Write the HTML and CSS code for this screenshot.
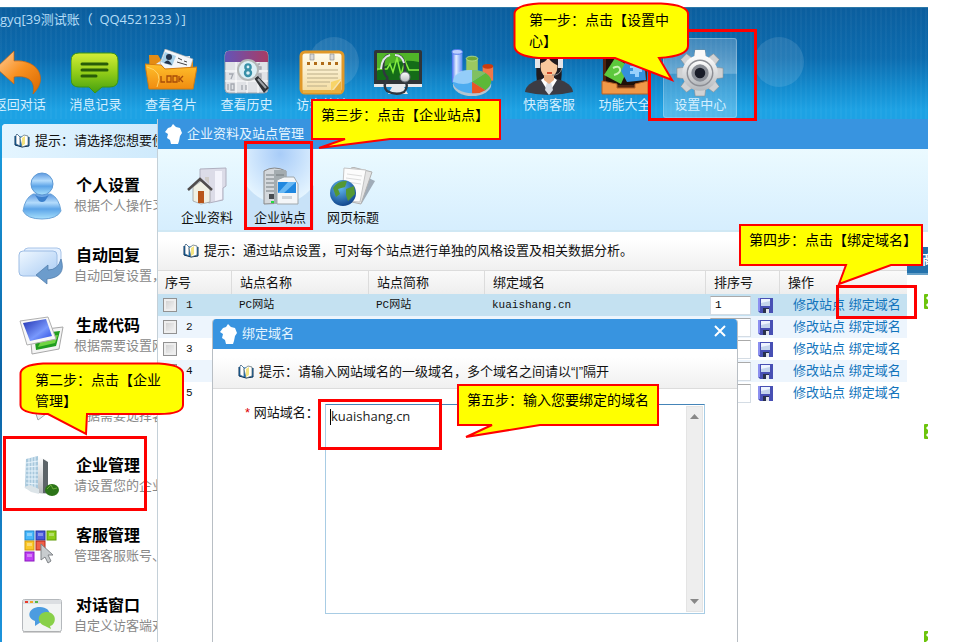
FILE: index.html
```html
<!DOCTYPE html>
<html lang="zh-CN">
<head>
<meta charset="utf-8">
<title>企业资料及站点管理</title>
<link rel="stylesheet" href="styles.css">
</head>
<body>
<svg class="defs" width="0" height="0" aria-hidden="true">
  <defs>
    <linearGradient id="orange" x1="0" y1="0" x2="1" y2="1"><stop offset="0" stop-color="#ffd0a0"/><stop offset=".5" stop-color="#f89020"/><stop offset="1" stop-color="#d86800"/></linearGradient>
    <linearGradient id="folder" x1="0" y1="0" x2="0" y2="1"><stop offset="0" stop-color="#ffc02c"/><stop offset="1" stop-color="#f08c10"/></linearGradient>
    <linearGradient id="green" x1="0" y1="0" x2="0" y2="1"><stop offset="0" stop-color="#d4ee38"/><stop offset=".5" stop-color="#90cc18"/><stop offset="1" stop-color="#44a010"/></linearGradient>
    <linearGradient id="purple" x1="0" y1="0" x2="1" y2="0"><stop offset="0" stop-color="#6454b8"/><stop offset="1" stop-color="#a83c64"/></linearGradient>
    <linearGradient id="paper" x1="0" y1="0" x2="0" y2="1"><stop offset="0" stop-color="#fffdf0"/><stop offset="1" stop-color="#f4dca0"/></linearGradient>
    <linearGradient id="grey" x1="0" y1="0" x2="0" y2="1"><stop offset="0" stop-color="#ffffff"/><stop offset="1" stop-color="#b4b8bc"/></linearGradient>
    <linearGradient id="blue" x1="0" y1="0" x2="0" y2="1"><stop offset="0" stop-color="#5c98e0"/><stop offset=".35" stop-color="#b4dcfc"/><stop offset=".6" stop-color="#5ca4e8"/><stop offset="1" stop-color="#a8e0fc"/></linearGradient>
    <linearGradient id="bar" x1="0" y1="0" x2="1" y2="0"><stop offset="0" stop-color="#4068f0"/><stop offset=".4" stop-color="#e4f0ff"/><stop offset="1" stop-color="#5888f4"/></linearGradient>
    <linearGradient id="bubble" x1="0" y1="0" x2="1" y2="1"><stop offset="0" stop-color="#f0f8ff"/><stop offset="1" stop-color="#aaccf4"/></linearGradient>
    <linearGradient id="screen" x1="0" y1="0" x2="1" y2="1"><stop offset="0" stop-color="#2030b0"/><stop offset=".6" stop-color="#7898fc"/><stop offset="1" stop-color="#2848e0"/></linearGradient>
    <radialGradient id="globe" cx=".4" cy=".3" r=".8"><stop offset="0" stop-color="#60b8f0"/><stop offset="1" stop-color="#083880"/></radialGradient>
    <symbol id="book" viewBox="0 0 16 14"><path d="M1 2v9l7 2 7-1V3" fill="#1488d8" stroke="#0c2c50"/><path d="M3 0l3 3v9L2 10V1z" fill="#fff" stroke="#244c70" stroke-width=".7"/><path d="M6 4l4-3 4 1v9l-6 2z" fill="#fff" stroke="#55666c" stroke-width=".7"/><path d="M8 4l3-2v8l-3 2z" fill="#f4e480"/></symbol>
    <symbol id="bird" viewBox="0 0 17 20"><path d="M8 0l3 3 4 1 2 5-2 3-1 5-1 3H6l-1-4-3-2 1-4-3-2 3-4 3-1z" fill="#fff"/></symbol>
    <symbol id="disk" viewBox="0 0 15 15"><path d="M0 0h15v15H2l-2-2z" fill="#4850b4"/><path d="M0 0h2v13H0z" fill="#8c90f0"/><path d="M3 1h9v7H3z" fill="#eef4ff"/><path d="M3 5l9-2v5H3z" fill="#c4d4ec"/><path d="M5 10h6v5H5z" fill="#28304c"/><path d="M8 11h3v4H8z" fill="#e0e4ec"/></symbol>
    <symbol id="plus" viewBox="0 0 15 15"><rect width="15" height="15" rx="1" fill="#6cc40c"/><path d="M3 3l9 9M12 3l-9 9" stroke="#fff" stroke-width="3"/></symbol>
  </defs>
</svg>

<div class="stage">
<div class="app">
  <header class="banner">
    <div class="glow glow-left"></div>
    <div class="glow glow-right"></div>
    <h1 class="account">gyq[39测试账（&nbsp; QQ4521233 ）]</h1>
    <nav class="toolbar" aria-label="工具栏">
      <button class="tool" type="button">
        <svg width="48" height="48" viewBox="0 0 48 48"><path d="M0 19L18 2v10c24-2 35 18 19 33 3-13-5-19-19-17v7z" fill="url(#orange)" stroke="#c86410" stroke-width=".7"/></svg>
        <span>返回对话</span>
      </button>
      <button class="tool" type="button">
        <svg width="48" height="48" viewBox="0 0 48 48"><path d="M8 4h32q7 0 7 8v18q0 8-8 8H31l-7 6-6-6H8q-8 0-8-8V12q0-8 8-8z" fill="url(#green)" stroke="#3c9414"/><path d="M11 15h25M11 21h25M11 27h14" stroke="#285c08" stroke-width="3" stroke-linecap="round"/></svg>
        <span>消息记录</span>
      </button>
      <button class="tool" type="button">
        <svg width="52" height="48" viewBox="0 0 52 48"><path d="M4 6h9l3 5h32v20H5z" fill="#e48c14"/><path d="M8 17l12-8 25-2v12H10z" fill="#e8ecf0"/><path d="M20 0l28 10-3 10H20l-5-6z" fill="#f4f6f8" stroke="#a8a8a8" stroke-width=".6"/><path d="M20 3l11 4-4 10-11-4z" fill="#a8d0e8"/><circle cx="24" cy="8" r="3" fill="#24344c"/><path d="M19 14q4-6 8 2z" fill="#24344c"/><path d="M33 9l4 2m2 1l3 1M32 13l10 3" stroke="#444"/><path d="M0 15l16 1 4 4 32-2-4 22H4z" fill="url(#folder)" stroke="#d47c10"/><path d="M2 18q17 4 10 20" fill="none" stroke="#ffd468"/><path d="M16 27v6h4M22 27h4v6h-4zM28 27h4v6h-4zM34 27v6M38 27l-3 3 3 3" fill="none" stroke="#a84c08" stroke-width="1.300"/></svg>
        <span>查看名片</span>
      </button>
      <button class="tool" type="button">
        <svg width="48" height="48" viewBox="0 0 48 48"><rect x="2" y="2" width="43" height="42" rx="4" fill="#e0e2e6" stroke="#a0a4ac"/><path d="M6 2h35q4 0 4 5v6H2V7q0-5 4-5z" fill="url(#purple)"/><path d="M2 22h43M2 32h43M13 13v31M24 13v31M35 13v31" stroke="#fff"/><path d="M6 25h4l-2 5M5 35v6M8 35h3v6H8zM19 36v5M23 36v5M37 15h-2v5h3v-2h-3M38 30v-5h-3v2h3" fill="none" stroke="#a4a8b0" stroke-width="1.300"/><path d="M31 29l4-2 11 12-5 5z" fill="#303438"/><path d="M35 30l8 9" stroke="#a0a4a8" stroke-width="2"/><circle cx="25" cy="21" r="10" fill="#ddf0f6" stroke="#b4b8b8" stroke-width="2"/><circle cx="25" cy="18" r="2.600" fill="none" stroke="#3890a8" stroke-width="2.400"/><circle cx="25" cy="24" r="3" fill="none" stroke="#3890a8" stroke-width="2.400"/></svg>
        <span>查看历史</span>
      </button>
      <button class="tool" type="button">
        <svg width="48" height="48" viewBox="0 0 48 48"><rect x="3" y="3" width="42" height="41" rx="4" fill="url(#paper)" stroke="#e09828" stroke-width="3"/><path d="M5 41h31l7-9v12H5z" fill="#e8b040"/><path d="M33 42l10-12-10 3z" fill="#f8d468"/><path d="M9 13h3v3H9zM16 13h3v3h-3zM23 13h3v3h-3zM30 13h3v3h-3zM37 13h3v3h-3z" fill="#b06c18"/><path d="M9 21h31M9 25h31M9 29h31M9 33h23M9 37h20" stroke="#bcae88"/><path d="M12 5h4v6h-4zM32 5h4v6h-4z" fill="#d8d8d8" stroke="#888" stroke-width=".6"/></svg>
        <span>访客统计</span>
      </button>
      <button class="tool" type="button" aria-label="监控">
        <svg width="50" height="48" viewBox="0 0 50 48"><rect x="1" y="1" width="48" height="36" rx="2" fill="#303438"/><path d="M4 4h42v27H4z" fill="#146c18"/><path d="M4 4h42v9Q24 8 4 22z" fill="#50b428"/><path d="M4 20h10l3-5 3 8 4-14 4 17 4-14 4 9h10" fill="none" stroke="#84ec40" stroke-width="1.500"/><path d="M1 35h48v3H1zM19 38h12l4 7H15z" fill="#e8eaec"/><path d="M16 6C8 8 9 25 15 29M22 6c8 0 10 6 10 17M15 29q-6 8-1 13 9 5 17 1 5-5 1-12" fill="none" stroke="#303840" stroke-width="2.400"/><path d="M17 6q-8 2-9 14M22 6q7 0 9 8" fill="none" stroke="#e4e8ec" stroke-width="2"/><circle cx="32" cy="28" r="5" fill="url(#grey)" stroke="#687078"/></svg>
      </button>
      <button class="tool" type="button" aria-label="统计">
        <svg width="48" height="50" viewBox="0 0 48 50"><path d="M2 3v32h11V3z" fill="url(#bar)"/><ellipse cx="7.500" cy="3" rx="5.500" ry="2.500" fill="#bcd0ff" stroke="#5078ec"/><path d="M17 10v17h12V10z" fill="#9cc860"/><ellipse cx="23" cy="10" rx="6" ry="2.500" fill="#70a838" stroke="#b0d888"/><path d="M34 18v15h11V18z" fill="#f07848"/><ellipse cx="39.500" cy="18" rx="5.500" ry="2.500" fill="#c83c10"/><ellipse cx="23" cy="37" rx="20" ry="12" fill="#b4c4d0"/><ellipse cx="23" cy="34" rx="20" ry="12" fill="#4cacf0"/><path d="M23 34L37 25q12 8 0 18z" fill="#5cb838"/><path d="M23 34l14 9q-6 4-14 3z" fill="#e85424"/><path d="M23 34V22q8 0 14 3z" fill="#80c060"/><path d="M3 34q2-14 20-12v12q-8 5-20 0z" fill="#b4dcfc" opacity=".7"/></svg>
      </button>
      <button class="tool" type="button">
        <svg width="48" height="48" viewBox="0 0 48 48"><path d="M12 33Q8 2 24 2t12 31z" fill="#201c20"/><path d="M0 43q1-9 16-13h16q15 4 16 13-24 6-48 0z" fill="#3c3c44"/><path d="M16 31l8 13 8-13-4-3h-8z" fill="#fff"/><path d="M22 33h4l2 8-4 5-4-5z" fill="#d8dce4"/><ellipse cx="24" cy="17" rx="8.500" ry="12" fill="#f8c89c"/><path d="M19 26h10v5l-5 4-5-4z" fill="#e8ac80"/><path d="M14 14Q16 0 24 4q9-2 10 13-8-3-11-9-2 6-9 6z" fill="#201c20"/><path d="M10 10h5v9h-5zM33 10h5v9h-5z" fill="#e4e4e8"/><path d="M37 19q-2 8-10 7" fill="none" stroke="#888"/><path d="M22 24h5" stroke="#d04828" stroke-width="2"/></svg>
        <span>快商客服</span>
      </button>
      <button class="tool" type="button">
        <svg width="48" height="48" viewBox="0 0 48 48"><path d="M2 6h44v38H2z" fill="#502410"/><path d="M5 9h38v27H5z" fill="#201008"/><path d="M14 9l14 8-8 18-17-9z" fill="#5cc83c"/><path d="M27 8l16 2 2 21-19 2-6-11z" fill="#3490dc"/><path d="M12 19q6-3 7 1t-6 6" fill="none" stroke="#c8f4b0" stroke-width="2"/><path d="M29 17h4v-3h4v4h4v5h-3v5h-4v-3h-5v-3h3v-3h-3z" fill="#98d0fc"/><path d="M1 32l15 3v4h18v-4l13-3v13H1z" fill="#f09848" stroke="#b86024"/></svg>
        <span>功能大全</span>
      </button>
      <button class="tool tool-active" type="button">
        <svg width="50" height="50" viewBox="0 0 50 50"><g fill="#d0d2d4" stroke="#8c8e90" stroke-width=".6"><path d="M20 1h10l1 8h-12zM19 41h12l-1 8H20zM1 20l8-1v12l-8-1zM41 19l8 1v10l-8 1z"/><path d="M11 5l8 6-8 8-6-8zM39 5l6 6-6 8-8-8zM5 39l6-8 8 8-8 6zM31 39l8-8 6 8-6 6z"/></g><circle cx="25" cy="25" r="18.500" fill="url(#grey)"/><path d="M20 1h10l1 8h-12z" fill="#f8f8f8"/><circle cx="25" cy="25" r="14" fill="#8c8e94"/><circle cx="25" cy="25" r="12.500" fill="url(#grey)"/><circle cx="25" cy="25" r="9" fill="#888c94"/><circle cx="25" cy="25" r="5.500" fill="#181c28"/></svg>
        <span>设置中心</span>
      </button>
    </nav>
  </header>

  <div class="workspace">
    <aside class="sidebar">
      <p class="side-hint"><svg class="i-book"><use href="#book"/></svg>提示：请选择您想要使用的功能</p>
      <ul class="menu">
        <li class="entry">
          <svg width="42" height="48" viewBox="0 0 42 48"><path d="M12 22h18q8 4 10 17-4 8-19 8T2 39q2-13 10-17z" fill="url(#blue)" stroke="#6ca4d8"/><circle cx="21" cy="12" r="11" fill="url(#blue)" stroke="#5c98d4"/><path d="M14 23q7 4 14 0l-4 6q-3 2-6 0z" fill="#3c80cc"/></svg>
          <div><h2>个人设置</h2><p>根据个人操作习惯</p></div>
        </li>
        <li class="entry">
          <svg width="48" height="40" viewBox="0 0 48 40"><rect x="6" y="2" width="37" height="24" rx="4" fill="#e4f0ff" stroke="#a8c4e8"/><rect x="1" y="5" width="38" height="25" rx="4" fill="url(#bubble)" stroke="#9cbce4"/><path d="M43 13q6 18-14 20v5L18 29l12-10v5q10 0 13-11z" fill="#6c9ccc" stroke="#4c78a8" stroke-width=".7"/></svg>
          <div><h2>自动回复</h2><p>自动回复设置，设</p></div>
        </li>
        <li class="entry">
          <svg width="46" height="40" viewBox="0 0 46 40"><path d="M11 15l33-4-4 22-27 5z" fill="#f4f4f4" stroke="#a8a8a8"/><path d="M15 18l26-3-4 15-20 4z" fill="#209c20"/><path d="M24 21l15-2-3 8-17 4z" fill="#70d444"/><path d="M1 5l28-4 8 22-29 6z" fill="#f8f8f8" stroke="#b0b0b0"/><path d="M4 7l23-4 6 17-22 5z" fill="url(#screen)"/></svg>
          <div><h2>生成代码</h2><p>根据需要设置网站</p></div>
        </li>
        <li class="entry">
          <svg width="40" height="40" viewBox="0 0 40 40"><path d="M6 4l26 18-16 12z" fill="#e8ecf0" stroke="#a0a4a8"/></svg>
          <div><h2>&nbsp;</h2><p>根据需要选择客服</p></div>
        </li>
        <li class="entry">
          <svg width="40" height="42" viewBox="0 0 40 42"><path d="M4 4l12-3v37L3 33z" fill="#a8c8dc"/><path d="M16 1l9 4v34l-9-1z" fill="url(#grey)"/><path d="M21 4l5 3v31h-5z" fill="#5c6468"/><path d="M4 8l12-2M4 12l12-1M4 16h12M4 20h12M4 24h12M4 28l12 1M7 3v31M10 2v33M13 2v35" stroke="#e8f4fc"/><path d="M2 32l6-2 9 4v5l-8-2z" fill="#dce4e8"/><ellipse cx="30" cy="35" rx="7" ry="6" fill="#2c7418"/><path d="M25 34l4-4 2 4 4-1" stroke="#6cac38" fill="none"/></svg>
          <div><h2>企业管理</h2><p>请设置您的企业信</p></div>
        </li>
        <li class="entry">
          <svg width="38" height="36" viewBox="0 0 38 36"><g stroke-width="1"><rect x="2" y="3" width="9" height="9" fill="#48b8fc" stroke="#2088cc"/><rect x="13" y="3" width="9" height="9" fill="#4858dc" stroke="#2030a0"/><rect x="24" y="3" width="9" height="9" fill="#8ccc18" stroke="#609c08"/><rect x="2" y="13" width="9" height="9" fill="#fcc828" stroke="#d09c10"/><rect x="13" y="13" width="9" height="9" fill="#f06048" stroke="#b82818"/><rect x="2" y="24" width="9" height="9" fill="#c040f4" stroke="#8c18c0"/></g><path d="M4 5h5v3H4zM15 5h5v3h-5zM26 5h5v3h-5zM4 15h5v3H4zM4 26h5v3H4z" fill="#fff" opacity=".35"/><path d="M18 16v16l4-3 3 6 3-2-3-6h5z" fill="#c8cccf" stroke="#808488"/></svg>
          <div><h2>客服管理</h2><p>管理客服账号、客</p></div>
        </li>
        <li class="entry">
          <svg width="40" height="36" viewBox="0 0 40 36"><rect x=".5" y="1.500" width="39" height="32" rx="2" fill="#f2f4f4" stroke="#b4b8bc"/><path d="M1 2h38v4H1z" fill="#dcdfe2"/><path d="M3 3h3v2H3z" fill="#e83c2c"/><path d="M8 3h3v2H8z" fill="#f0a428"/><path d="M13 3h3v2h-3z" fill="#58b848"/><path d="M18 9c13 0 13 15 1 15l-6 4v-5C4 20 6 9 18 9z" fill="#4c9ce0"/><path d="M25 14c11 1 9 13 3 14l1 3-6-3c-9-3-8-14 2-14z" fill="#88d048"/><path d="M1 34h38" stroke="#a8a8a8"/></svg>
          <div><h2>对话窗口</h2><p>自定义访客端对话</p></div>
        </li>
      </ul>
    </aside>

    <main class="window">
      <div class="bar"><svg class="i-bird"><use href="#bird"/></svg><h2>企业资料及站点管理</h2></div>
      <nav class="tabs" aria-label="站点管理">
        <button class="tab" type="button">
          <svg width="40" height="40" viewBox="0 0 40 40"><path d="M13 2l26-1v18l-3 2v12l-14 3-9-6z" fill="#dcdce8" stroke="#b0b0c0"/><path d="M28 4v30l7-2V4z" fill="#f4f4fc"/><path d="M6 20l8-6 9 7v14l-9 2-8-3z" fill="#f0f0e4" stroke="#888" stroke-width=".6"/><path d="M1 23l12-11 12 11" fill="none" stroke="#504c4c" stroke-width="2.500"/><path d="M11 24h6v12h-6z" fill="#b85418"/><path d="M18 10h4v7l-4-4z" fill="#d0ccc8"/></svg>
          <span>企业资料</span>
        </button>
        <button class="tab tab-active" type="button">
          <svg width="38" height="40" viewBox="0 0 38 40"><path d="M3 4q10-6 22 0v32l-22 1z" fill="#d4d8dc" stroke="#888"/><path d="M13 3h12v34H13z" fill="#a4acb0"/><path d="M5 8h8M5 12h8M5 16h8M5 20h8M5 24h8M15 8h8" stroke="#747c80"/><path d="M8 27h5v5H8z" fill="#484c50"/><path d="M16 13l7-3h10l4 7v20H16z" fill="#f4f6f8" stroke="#a0a8ac"/><path d="M17 15h18v11H17z" fill="#2088e0"/><path d="M17 26l10-11h8L23 26z" fill="#68b8f4"/><path d="M21 29h10v3H21z" fill="#d0d4d8"/><path d="M10 34h3v2h-3z" fill="#24dc40"/></svg>
          <span>企业站点</span>
        </button>
        <button class="tab" type="button">
          <svg width="46" height="40" viewBox="0 0 46 40"><path d="M32 8l13 6-13 22h-8z" fill="#a0acb8"/><path d="M22 0l20 5-11 32-14-3z" fill="#e4e4e4" stroke="#b0b0b0"/><path d="M14 1l22 2-6 32-18-1z" fill="#fcfcfc" stroke="#c4c4c4"/><path d="M17 7l15 2M16 11l15 2M17 15l14 2" stroke="#ddd"/><circle cx="13" cy="26" r="13" fill="url(#globe)"/><path d="M3 21q5-8 14-7l-2 6-7 2 2 5-4 3zM16 22l8-3 1 8-7 7-2-6z" fill="#549834"/></svg>
          <span>网页标题</span>
        </button>
      </nav>
      <div class="lower">
        <div class="content">
          <p class="hint"><svg class="i-book"><use href="#book"/></svg>提示：通过站点设置，可对每个站点进行单独的风格设置及相关数据分析。</p>
          <table class="sites">
            <colgroup><col class="c-no"><col class="c-name"><col class="c-short"><col class="c-domain"><col class="c-sort"><col></colgroup>
            <thead><tr><th>序号</th><th>站点名称</th><th>站点简称</th><th>绑定域名</th><th>排序号</th><th>操作</th></tr></thead>
            <tbody>
              <tr class="current"><td><label><input type="checkbox">1</label></td><td>PC网站</td><td>PC网站</td><td>kuaishang.cn</td><td><div class="sort"><input type="text" value="1" aria-label="排序号"><button type="button" aria-label="保存"><svg><use href="#disk"/></svg></button></div></td><td><a href="#">修改站点</a> <a href="#">绑定域名</a></td></tr>
              <tr><td><label><input type="checkbox">2</label></td><td></td><td></td><td></td><td><div class="sort"><input type="text" aria-label="排序号"><button type="button" aria-label="保存"><svg><use href="#disk"/></svg></button></div></td><td><a href="#">修改站点</a> <a href="#">绑定域名</a></td></tr>
              <tr><td><label><input type="checkbox">3</label></td><td></td><td></td><td></td><td><div class="sort"><input type="text" aria-label="排序号"><button type="button" aria-label="保存"><svg><use href="#disk"/></svg></button></div></td><td><a href="#">修改站点</a> <a href="#">绑定域名</a></td></tr>
              <tr><td><label><input type="checkbox">4</label></td><td></td><td></td><td></td><td><div class="sort"><input type="text" aria-label="排序号"><button type="button" aria-label="保存"><svg><use href="#disk"/></svg></button></div></td><td><a href="#">修改站点</a> <a href="#">绑定域名</a></td></tr>
              <tr><td><label><input type="checkbox">5</label></td><td></td><td></td><td></td><td><div class="sort"><input type="text" aria-label="排序号"><button type="button" aria-label="保存"><svg><use href="#disk"/></svg></button></div></td><td><a href="#">修改站点</a> <a href="#">绑定域名</a></td></tr>
            </tbody>
          </table>
        </div>
        <aside class="strip">
          <strong>商</strong>
          <svg><use href="#plus"/></svg>
          <svg class="second"><use href="#plus"/></svg>
          <svg class="third"><use href="#plus"/></svg>
        </aside>
      </div>

      <section class="dialog" role="dialog" aria-labelledby="dialog-title">
        <div class="bar"><svg class="i-bird"><use href="#bird"/></svg><h2 id="dialog-title">绑定域名</h2>
          <button class="close" type="button" aria-label="关闭"><svg width="12" height="12" viewBox="0 0 12 12"><path d="M1 1l10 10M11 1L1 11" stroke="#fff" stroke-width="2"/></svg></button>
        </div>
        <p class="hint">
          <svg class="i-book"><use href="#book"/></svg>提示：请输入网站域名的一级域名，多个域名之间请以“|”隔开</p>
        <div class="field">
          <label for="domains"><span class="star">*</span> 网站域名：</label>
          <div class="editor">
            <textarea id="domains">kuaishang.cn</textarea>
            <span class="caret"></span>
            <div class="scroll"><svg width="9" height="5" viewBox="0 0 9 5"><path d="M0 5l4.500-5L9 5z"/></svg><svg width="9" height="5" viewBox="0 0 9 5"><path d="M0 0h9L4.500 5z"/></svg></div>
          </div>
        </div>
      </section>
    </main>
  </div>
</div>

<div class="mark mark-settings"></div>
<div class="mark mark-tab"></div>
<div class="mark mark-bind"></div>
<div class="mark mark-domain"></div>
<div class="mark mark-company"></div>

<div class="note note-1"><svg width="176" height="80" viewBox="0 0 176 80"><path d="M26 1.500H148Q175 3 175 12V44Q175 54 146 56L159 78 102 56H26Q1.500 54 1.500 44V12Q1.500 3 26 1.500z"/></svg><p>第一步：点击【设置中心】</p></div>
<div class="note note-2"><svg width="166" height="74" viewBox="0 0 166 74"><path d="M24 1.500H140Q164 3 164 12V43Q164 52 140 52H68L67 72 29 52H24Q1.500 51 1.500 43V12Q1.500 3 24 1.500z"/></svg><p>第二步：点击【企业<br>管理】</p></div>
<div class="note note-3"><svg width="190" height="52" viewBox="0 0 190 52"><path d="M1 1H189V40H79L8 49 34 40H1z"/></svg><p>第三步：点击【企业站点】</p></div>
<div class="note note-4"><svg width="184" height="62" viewBox="0 0 184 62"><path d="M1 1H183V41H152L100 60 107 41H1z"/></svg><p>第四步：点击【绑定域名】</p></div>
<div class="note note-5"><svg width="202" height="54" viewBox="0 0 202 54"><path d="M1 1H201V41H83L9 53 35 41H1z"/></svg><p>第五步：输入您要绑定的域名</p></div>
</div>
</body>
</html>
```
FILE: styles.css
```css
* { box-sizing: border-box; }
body {
  margin: 0;
  background: #fff;
  color: #111;
  font: 13px/20px "Liberation Sans", "Noto Sans CJK SC", sans-serif;
}
h1, h2, p, ul { margin: 0; padding: 0; font-weight: normal; }
h2 { font-size: 13px; }
ul { list-style: none; }
button { border: 0; padding: 0; background: none; font: inherit; color: inherit; }
svg { display: block; flex: none; }
.defs { position: absolute; }

.stage {
  position: relative;
  height: 100vh;
  padding: 7px 45px 0 0;
  overflow: hidden;
}
.app { height: 100%; display: flex; flex-direction: column; overflow: hidden; }

/* Banner */
.banner {
  position: relative;
  height: 112px;
  flex: none;
  border-top: 1px solid #2c78a8;
  background:
    repeating-linear-gradient(90deg, #ffffff08 0 2px, #ffffff00 2px 5px),
    linear-gradient(#0b5e9e, #0c6caf 45%, #158fd2 75%, #1da2e4 92%);
}
.account {
  position: relative;
  height: 24px;
  font: 13px/22px "Open Sans", "Noto Sans CJK SC", sans-serif;
  color: #b4dcf6;
}
.glow {
  position: absolute;
  top: 29px;
  width: 50px;
  height: 50px;
  border-radius: 50%;
  background: #ffffff1c;
}
.glow-left { left: 309px; }
.glow-right { left: 754px; }
.toolbar {
  position: relative;
  display: grid;
  grid-template-columns: repeat(10, 1fr);
  width: 756px;
  margin: 6px 0 0 -18px;
}
.tool {
  display: flex;
  flex-direction: column;
  align-items: center;
  height: 80px;
  padding-top: 10px;
  border: 1px solid transparent;
  color: #d4efff;
}
.tool span { line-height: 16px; white-space: nowrap; }
.tool-active {
  margin: 0 1px;
  border-color: #ffffff40;
  border-radius: 3px;
  background: linear-gradient(#ffffff38, #ffffff60 44%, #ffffff30 45%, #ffffff40);
}
.tool svg { height: 48px; }

/* Body below the banner */
.workspace {
  flex: 1;
  min-height: 0;
  display: grid;
  grid-template-columns: 157px 1fr;
  background: linear-gradient(#1da2e4, #0b62a4 50%, #1c94dc);
}
.sidebar {
  margin: 5px 0 0 2px;
  border-top-left-radius: 4px;
  background: #fff;
  overflow: hidden;
  white-space: nowrap;
}
.side-hint {
  display: flex;
  align-items: center;
  height: 34px;
  padding-left: 12px;
  background: linear-gradient(90deg, #e4f5ff, #cfeafc);
}
.i-book { width: 16px; height: 14px; margin-right: 5px; }
.menu { padding-top: 3px; }
.entry {
  display: grid;
  grid-template-columns: 72px 1fr;
  align-items: center;
  height: 70px;
}
.entry svg { margin-left: 8px; justify-self: center; }
.entry h2 { font-size: 16px; font-weight: bold; color: #000; padding-left: 2px; }
.entry p { color: #888; }

/* Window */
.window {
  position: relative;
  display: flex;
  flex-direction: column;
  border-left: 1px solid #c4d0d8;
  background: #fff;
  overflow: hidden;
}
.bar {
  display: flex;
  flex: none;
  align-items: center;
  height: 30px;
  padding: 0 11px 0 7px;
  background: #3894e0;
  color: #e4f4ff;
}
.i-bird { width: 17px; height: 20px; margin-right: 5px; }
.tabs {
  display: flex;
  flex: none;
  gap: 5px;
  height: 83px;
  padding-left: 15px;
  border-bottom: 2px solid #d0e8f4;
  background: linear-gradient(#ebfaff, #d6eefe);
}
.tab {
  display: flex;
  flex-direction: column;
  align-items: center;
  width: 68px;
  padding-top: 18px;
}
.tab span { line-height: 22px; }
.tab-active {
  background: radial-gradient(ellipse 44px 50px at 50% 5px, #a8ccf8, #e4f4ff 98%, #c8e2f8 100%);
}
.lower { flex: 1; display: grid; grid-template-columns: 1fr 21px; }
.hint {
  display: flex;
  align-items: center;
  height: 39px;
  padding-left: 25px;
  border-bottom: 1px solid #dcdcdc;
  background: linear-gradient(#fff 20%, #f0f0f0);
  white-space: nowrap;
}

/* Site list */
.sites { width: 100%; table-layout: fixed; border-collapse: collapse; line-height: 20px; }
.c-no { width: 73px; }
.c-name { width: 137px; }
.c-short { width: 116px; }
.c-domain { width: 221px; }
.c-sort { width: 74px; }
.sites th {
  height: 23px;
  padding: 0 0 0 9px;
  text-align: left;
  font-weight: normal;
  background: linear-gradient(#fafafa, #eee);
  box-shadow: inset 1px 0 #dcdcdc;
}
.sites th:first-child { padding-left: 7px; box-shadow: none; }
.sites td {
  height: 22px;
  padding: 0 0 0 8px;
  font-family: "Liberation Mono", "Noto Sans CJK SC", monospace;
  font-size: 11px;
}
.sites td:first-child { padding-left: 5px; }
.sites td:last-child {
  padding-left: 14px;
  font: 13px/20px "Liberation Sans", "Noto Sans CJK SC", sans-serif;
  white-space: nowrap;
}
.sites tbody tr:nth-child(even) { background: #edf5fd; }
.sites .current { background: #c4e1f1; }
.sites label { display: flex; align-items: center; gap: 9px; }
.sites input[type="checkbox"] {
  appearance: none;
  width: 14px;
  height: 14px;
  margin: 0;
  border: 1px solid #929292;
  background: linear-gradient(135deg, #ccc, #f8f8f8);
  box-shadow: inset 0 0 0 2px #eee;
}
.sort { display: flex; align-items: center; gap: 7px; margin-left: -3px; }
.sort input {
  width: 41px;
  height: 19px;
  padding: 0 4px;
  border: 1px solid #d4dce4;
  border-top-color: #aaa;
  font: inherit;
  background: #fff;
}
.sort svg { width: 15px; height: 15px; }
.sites a { color: #1274bc; text-decoration: none; }

.strip { padding-top: 15px; overflow: hidden; }
.strip strong {
  display: block;
  height: 28px;
  padding-left: 15px;
  border-bottom: 2px solid #65a0c8;
  background: #2472ac;
  color: #fff;
  line-height: 26px;
}
.strip svg { width: 15px; height: 15px; margin: 19px 0 0 17px; }
.strip .second { margin-top: 115px; }
.strip .third { margin-top: 192px; }

/* Domain dialog */
.dialog {
  position: absolute;
  top: 200px;
  right: 190px;
  bottom: 0;
  left: 54px;
  border: solid #b8bec4;
  border-width: 0 1px;
  border-radius: 4px 4px 0 0;
  background: #fff;
  overflow: hidden;
}
.dialog .hint { height: 40px; padding-top: 6px; }
.close { margin-left: auto; padding: 4px 0 10px; }
.field { display: flex; padding: 15px 32px 0; }
.field label { width: 80px; line-height: 18px; white-space: nowrap; }
.star { color: #d00; }
.editor {
  position: relative;
  flex: 1;
  display: flex;
  height: 210px;
  border: 1px solid #a8cce4;
  border-top-color: #4484b8;
}
textarea {
  flex: 1;
  min-width: 0;
  padding: 2px 5px;
  border: 0;
  outline: 0;
  resize: none;
  overflow: hidden;
  color: #222;
  font: 13px/18px "Open Sans", sans-serif;
}
.caret { position: absolute; top: 4px; left: 4px; width: 1px; height: 16px; background: #000; }
.scroll {
  display: flex;
  flex-direction: column;
  justify-content: space-between;
  align-items: center;
  width: 17px;
  margin: 1px;
  padding: 7px 0;
  border: 1px solid #e4e4e4;
  background: #eee;
  fill: #888;
}

/* Step markers and notes laid over the interface */
.mark { position: absolute; border: 3px solid #f00; }
.mark-settings { left: 648px; top: 29px; width: 109px; height: 92px; }
.mark-tab { left: 244px; top: 141px; width: 69px; height: 89px; }
.mark-bind { left: 836px; top: 285px; width: 81px; height: 34px; }
.mark-domain { left: 318px; top: 399px; width: 124px; height: 51px; }
.mark-company { left: 3px; top: 436px; width: 144px; height: 75px; }
.note {
  position: absolute;
  color: #000;
  font-size: 14px;
  line-height: 21px;
}
.note svg { fill: #ff0; stroke: #f00; stroke-width: 2; }
.note p { position: absolute; top: 6px; left: 10px; white-space: nowrap; }
.note-1 { left: 513px; top: 2px; }
.note-2 { left: 19px; top: 362px; }
.note-1 p, .note-2 p { top: 8px; left: 16px; width: 144px; white-space: normal; }
.note-3 { left: 311px; top: 99px; }
.note-4 { left: 739px; top: 224px; }
.note-5 { left: 457px; top: 384px; }
```
